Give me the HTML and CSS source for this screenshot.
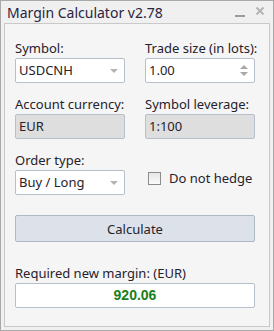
FILE: index.html
```html
<!DOCTYPE html>
<html lang="en">
<head>
  <meta charset="UTF-8">
  <title>Margin Calculator</title>
  <link rel="stylesheet" href="styles.css">
</head>
<body>
  <div class="window">
    <div class="title-bar">
      <span class="title">Margin Calculator v2.78</span>
      <span class="win-btn minimize"></span>
      <svg class="win-btn close" width="8" height="8" viewBox="0 0 8 8">
        <path d="M0.5 0.5L7.5 7.5M7.5 0.5L0.5 7.5" stroke="#b4b4b4" stroke-width="2"/>
      </svg>
    </div>

    <div class="panel">
      <div class="grid">
        <div class="field-group">
          <label>Symbol:</label>
          <div class="input select">USDCNH<span class="arrow"></span></div>
        </div>
        <div class="field-group">
          <label>Trade size (in lots):</label>
          <div class="input spin">1.00
            <span class="spinner"><span class="up"></span><span class="down"></span></span>
          </div>
        </div>

        <div class="field-group">
          <label>Account currency:</label>
          <div class="input readonly">EUR</div>
        </div>
        <div class="field-group">
          <label>Symbol leverage:</label>
          <div class="input readonly">1:100</div>
        </div>

        <div class="field-group">
          <label>Order type:</label>
          <div class="input select">Buy / Long<span class="arrow"></span></div>
        </div>
        <div class="check-row">
          <span class="checkbox"></span>
          <span>Do not hedge</span>
        </div>
      </div>

      <button class="calc-btn">Calculate</button>

      <div class="result">
        <label>Required new margin: (EUR)</label>
        <div class="input result-value">920.06</div>
      </div>
    </div>
  </div>
</body>
</html>
```

FILE: styles.css
```css
body {
  margin: 0;
  font-family: 'Noto Sans', 'DejaVu Sans', sans-serif;
  font-size: 13px;
  color: #26222c;
}

.window {
  width: 274px;
  height: 331px;
  box-sizing: border-box;
  border: 1px solid #a9a9a9;
  background: #f0f0f0;
  display: flex;
  flex-direction: column;
}

.title-bar {
  height: 22px;
  display: flex;
  align-items: center;
  padding: 0 6px;
}

.title {
  flex: 1;
  font-size: 14px;
  color: #2a2540;
}

.minimize {
  width: 10px;
  height: 2px;
  background: #9a9a9a;
  margin: 8px 11px 0 0;
}

.close {
  margin: 0 3px 2px 0;
}

.panel {
  flex: 1;
  margin: 0 3px 3px;
  border: 1px solid #c9c9c9;
  background: #f5f5f5;
  padding: 16px 14px 0 10px;
}

.grid {
  display: grid;
  grid-template-columns: 110px 110px;
  column-gap: 20px;
  row-gap: 13px;
}

.field-group label,
.result label {
  display: block;
  height: 16px;
  line-height: 16px;
  margin-bottom: 2px;
  white-space: nowrap;
}

.input {
  height: 25px;
  box-sizing: border-box;
  border: 1px solid #b5c0cc;
  border-radius: 2px;
  background: #fff;
  padding: 0 3px;
  line-height: 23px;
  position: relative;
}

.readonly {
  background: #dedede;
}

.arrow {
  position: absolute;
  right: 6px;
  top: 10px;
  border-left: 4px solid transparent;
  border-right: 4px solid transparent;
  border-top: 4px solid #b3b3b3;
}

.spinner .up,
.spinner .down {
  position: absolute;
  right: 6px;
  border-left: 4px solid transparent;
  border-right: 4px solid transparent;
}

.spinner .up {
  top: 6px;
  border-bottom: 4px solid #a8a8a8;
}

.spinner .down {
  top: 13px;
  border-top: 4px solid #a8a8a8;
}

.check-row {
  display: flex;
  align-items: center;
  gap: 8px;
  padding: 17px 0 0 3px;
  align-self: start;
}

.checkbox {
  width: 11px;
  height: 11px;
  border: 1px solid #8c8c8c;
  background: linear-gradient(#e6e6e6, #fbfbfb);
}

.calc-btn {
  display: block;
  width: 240px;
  height: 27px;
  margin-top: 20px;
  border: 1px solid #aeb9c6;
  border-radius: 2px;
  background: #dde2ea;
  font-family: inherit;
  font-size: 13px;
  color: #26222c;
}

.result {
  margin-top: 23px;
  width: 240px;
}

.result-value {
  text-align: center;
  font-family: 'Liberation Sans', Arial, sans-serif;
  font-weight: bold;
  font-size: 14px;
  color: #1a7f1a;
}
```
